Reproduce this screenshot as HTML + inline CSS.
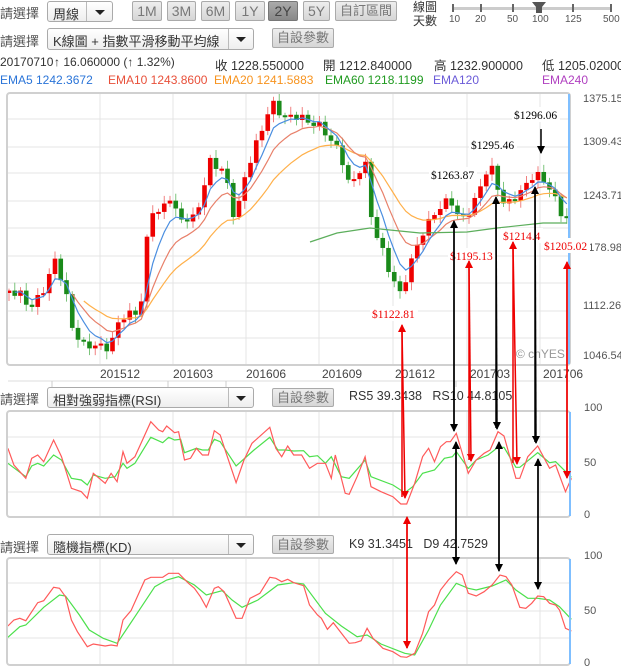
<!DOCTYPE html>
<html><head><meta charset="utf-8">
<style>
body{margin:0;width:621px;height:671px;overflow:hidden;background:#fff;font-family:"Liberation Sans","Noto Sans CJK TC",sans-serif;}
.t{position:absolute;white-space:nowrap;color:#444;}
.dd{position:absolute;border:1px solid #aaa;border-radius:3px;background:linear-gradient(#fff,#eee);font-size:13px;color:#333;box-sizing:border-box;}
.dd span{position:absolute;left:5px;top:2px;}
.dd i{position:absolute;top:0;bottom:0;right:0;border-left:1px solid #bbb;}
.dd i:after{content:"";position:absolute;left:50%;top:50%;margin:-2px 0 0 -5px;border:5px solid transparent;border-top:5px solid #222;border-bottom:0;}
.bt{position:absolute;border:1px solid #aaa;border-radius:2px;background:linear-gradient(#eee,#d6d6d6);color:#777;font-size:14px;text-align:center;box-sizing:border-box;}
.lg{position:absolute;top:73px;font-size:12px;overflow:hidden;white-space:nowrap;height:16px;}
</style></head><body>
<div class="t" style="left:0;top:3px;font-size:13px;color:#555">請選擇</div>
<div class="dd" style="left:47px;top:1px;width:66px;height:21px"><span>周線</span><i style="width:25px"></i></div>
<div class="bt" style="left:132px;top:1px;width:30px;height:20px;line-height:18px">1M</div>
<div class="bt" style="left:167px;top:1px;width:29px;height:20px;line-height:18px">3M</div>
<div class="bt" style="left:201px;top:1px;width:29px;height:20px;line-height:18px">6M</div>
<div class="bt" style="left:235px;top:1px;width:30px;height:20px;line-height:18px">1Y</div>
<div class="bt" style="left:268px;top:1px;width:30px;height:20px;line-height:18px;background:linear-gradient(#aaa,#888);color:#444;border-color:#777">2Y</div>
<div class="bt" style="left:303px;top:1px;width:27px;height:20px;line-height:18px">5Y</div>
<div class="bt" style="left:335px;top:1px;width:62px;height:20px;line-height:18px;font-size:13px">自訂區間</div>
<div class="t" style="left:413px;top:0;font-size:12px;line-height:14px;color:#333">線圖<br>天數</div>
<div style="position:absolute;left:453px;top:7px;width:159px;height:3px;background:#ccc"></div>
<div style="position:absolute;left:452px;top:4px;width:2px;height:8px;background:#666"></div>
<div style="position:absolute;left:480px;top:4px;width:2px;height:8px;background:#666"></div>
<div style="position:absolute;left:512px;top:4px;width:2px;height:8px;background:#666"></div>
<div style="position:absolute;left:572px;top:4px;width:2px;height:8px;background:#666"></div>
<div style="position:absolute;left:610px;top:4px;width:2px;height:8px;background:#666"></div>
<svg style="position:absolute;left:532px;top:2px" width="14" height="12"><path d="M0 0H14L10 5V11H4V5Z" fill="#555"/></svg>
<div class="t" style="left:449px;top:14px;font-size:10px;color:#555">10</div>
<div class="t" style="left:475px;top:14px;font-size:10px;color:#555">20</div>
<div class="t" style="left:507px;top:14px;font-size:10px;color:#555">50</div>
<div class="t" style="left:532px;top:14px;font-size:10px;color:#555">100</div>
<div class="t" style="left:565px;top:14px;font-size:10px;color:#555">125</div>
<div class="t" style="left:603px;top:14px;font-size:10px;color:#555">500</div>

<div class="t" style="left:0;top:31px;font-size:13px;color:#555">請選擇</div>
<div class="dd" style="left:47px;top:28px;width:207px;height:22px"><span>K線圖 + 指數平滑移動平均線</span><i style="width:24px"></i></div>
<div class="bt" style="left:272px;top:28px;width:62px;height:20px;line-height:18px;font-size:13px">自設參數</div>

<div class="t" style="left:0;top:55px;font-size:12px;color:#333">20170710</div>
<div class="t" style="left:54px;top:55px;font-size:12px;color:#333">↑ 16.060000 (↑ 1.32%)</div>
<div class="t" style="left:215px;top:55px;font-size:12.5px;color:#333">收 1228.550000</div>
<div class="t" style="left:323px;top:55px;font-size:12.5px;color:#333">開 1212.840000</div>
<div class="t" style="left:434px;top:55px;font-size:12.5px;color:#333">高 1232.900000</div>
<div class="t" style="left:542px;top:55px;font-size:12.5px;color:#333">低 1205.02000</div>

<div class="lg" style="left:0;width:102px;color:#2a74d8">EMA5 1242.3672</div>
<div class="lg" style="left:108px;width:102px;color:#e8503a">EMA10 1243.8600</div>
<div class="lg" style="left:214px;width:105px;color:#f7931e">EMA20 1241.5883</div>
<div class="lg" style="left:325px;width:102px;color:#1f9a1f">EMA60 1218.1199</div>
<div class="lg" style="left:433px;width:100px;color:#6a5ad8">EMA120</div>
<div class="lg" style="left:542px;width:79px;color:#b040c0">EMA240</div>

<div class="t" style="left:0;top:389px;font-size:13px;color:#555">請選擇</div>
<div class="dd" style="left:47px;top:387px;width:207px;height:21px"><span>相對強弱指標(RSI)</span><i style="width:24px"></i></div>
<div class="bt" style="left:272px;top:388px;width:62px;height:19px;line-height:17px;font-size:13px">自設參數</div>
<div class="t" style="left:349px;top:389px;font-size:12.5px;color:#333">RS5 39.3438 &nbsp; RS10 44.8105</div>

<div class="t" style="left:0;top:537px;font-size:13px;color:#555">請選擇</div>
<div class="dd" style="left:47px;top:534px;width:207px;height:21px"><span>隨機指標(KD)</span><i style="width:24px"></i></div>
<div class="bt" style="left:272px;top:535px;width:62px;height:19px;line-height:17px;font-size:13px">自設參數</div>
<div class="t" style="left:349px;top:537px;font-size:12.5px;color:#333">K9 31.3451 &nbsp; D9 42.7529</div>

<svg id="s" style="position:absolute;left:0;top:0" width="621" height="671" font-family="Liberation Sans, sans-serif">
<defs>
<marker id="ar" markerWidth="8" markerHeight="8" refX="7" refY="4" orient="auto" markerUnits="userSpaceOnUse"><path d="M0,0L8,4L0,8Z" fill="#e00"/></marker>
<marker id="ab" markerWidth="8" markerHeight="8" refX="7" refY="4" orient="auto" markerUnits="userSpaceOnUse"><path d="M0,0L8,4L0,8Z" fill="#000"/></marker>
</defs>
<g id="grid" stroke="#e4e4e4" stroke-width="1" fill="none"></g>
<g id="cd"></g>
<g id="ln" fill="none"></g>
<g id="frames" fill="none" stroke="#d0d0d0" stroke-width="2">
<rect x="7" y="93" width="563" height="272" rx="3"/>
<rect x="7" y="411" width="563" height="106" rx="3"/>
<rect x="7" y="558" width="563" height="107" rx="3"/>
</g>
<g stroke="#7fbfff" stroke-width="2"><line x1="569" y1="94" x2="569" y2="364"/><line x1="570" y1="412" x2="570" y2="516"/><line x1="570" y1="559" x2="570" y2="664"/></g>
<g fill="#555" font-size="11">
<text x="583" y="102">1375.15</text><text x="583" y="145">1309.43</text><text x="583" y="199">1243.71</text><text x="583" y="251">1178.98</text><text x="583" y="309">1112.26</text><text x="583" y="359">1046.54</text>
<text x="584" y="411">100</text><text x="584" y="466">50</text><text x="584" y="518">0</text>
<text x="584" y="559">100</text><text x="584" y="614">50</text><text x="584" y="666">0</text>
</g>
<g fill="#444" font-size="12">
<text x="100" y="378">201512</text><text x="173" y="378">201603</text><text x="246" y="378">201606</text><text x="322" y="378">201609</text><text x="395" y="378">201612</text><text x="470" y="378">201703</text><text x="543" y="378">201706</text>
</g>
<line x1="8" y1="381" x2="570" y2="381" stroke="#ddd"/>
<g stroke="#ccc"><line x1="52" y1="381" x2="52" y2="387"/><line x1="168" y1="381" x2="168" y2="387"/><line x1="226" y1="381" x2="226" y2="387"/><line x1="456" y1="381" x2="456" y2="387"/></g>
<text x="516" y="358" fill="#999" font-size="12">© cnYES</text>
<g font-family="Liberation Serif, serif" font-size="11.5">
<rect x="512" y="107" width="48" height="15" fill="#fff"/><text x="514" y="119" fill="#000">$1296.06</text>
<rect x="469" y="137" width="48" height="15" fill="#fff"/><text x="471" y="149" fill="#000">$1295.46</text>
<rect x="429" y="167" width="48" height="15" fill="#fff"/><text x="431" y="179" fill="#000">$1263.87</text>
<rect x="370" y="306" width="48" height="15" fill="#fff"/><text x="372" y="318" fill="#e00">$1122.81</text>
<rect x="448" y="248" width="48" height="15" fill="#fff"/><text x="450" y="260" fill="#e00">$1195.13</text>
<rect x="501" y="228" width="42" height="15" fill="#fff"/><text x="503" y="240" fill="#e00">$1214.4</text>
<rect x="542" y="238" width="48" height="15" fill="#fff"/><text x="544" y="250" fill="#e00">$1205.02</text>
</g>
<g stroke-width="1.5">
<line x1="402" y1="497" x2="402" y2="325" stroke="#e00" marker-end="url(#ar)"/><line x1="402" y1="330" x2="405" y2="498" stroke="#e00" marker-end="url(#ar)"/>
<line x1="407" y1="648" x2="407" y2="517" stroke="#e00" marker-end="url(#ar)"/><line x1="407" y1="520" x2="407" y2="648" stroke="#e00" marker-end="url(#ar)"/>
<line x1="469" y1="460" x2="469" y2="261" stroke="#e00" marker-end="url(#ar)"/><line x1="469" y1="265" x2="471" y2="461" stroke="#e00" marker-end="url(#ar)"/>
<line x1="513" y1="463" x2="513" y2="242" stroke="#e00" marker-end="url(#ar)"/><line x1="513" y1="246" x2="517" y2="464" stroke="#e00" marker-end="url(#ar)"/>
<line x1="567" y1="477" x2="567" y2="262" stroke="#e00" marker-end="url(#ar)"/><line x1="567" y1="266" x2="567" y2="478" stroke="#e00" marker-end="url(#ar)"/>
<line x1="454" y1="430" x2="454" y2="221" stroke="#000" marker-end="url(#ab)"/><line x1="454" y1="224" x2="454" y2="431" stroke="#000" marker-end="url(#ab)"/>
<line x1="456" y1="563" x2="456" y2="442" stroke="#000" marker-end="url(#ab)"/><line x1="456" y1="446" x2="456" y2="564" stroke="#000" marker-end="url(#ab)"/>
<line x1="496" y1="428" x2="496" y2="197" stroke="#000" marker-end="url(#ab)"/><line x1="496" y1="200" x2="497" y2="429" stroke="#000" marker-end="url(#ab)"/>
<line x1="499" y1="570" x2="499" y2="442" stroke="#000" marker-end="url(#ab)"/><line x1="499" y1="446" x2="499" y2="571" stroke="#000" marker-end="url(#ab)"/>
<line x1="535" y1="442" x2="535" y2="187" stroke="#000" marker-end="url(#ab)"/><line x1="535" y1="190" x2="536" y2="443" stroke="#000" marker-end="url(#ab)"/>
<line x1="538" y1="588" x2="538" y2="459" stroke="#000" marker-end="url(#ab)"/><line x1="538" y1="463" x2="538" y2="589" stroke="#000" marker-end="url(#ab)"/>
<line x1="541" y1="129" x2="541" y2="153" stroke="#000" marker-end="url(#ab)"/>
</g>
</svg>
<script>
var NS="http://www.w3.org/2000/svg";
function el(p,t,a){var e=document.createElementNS(NS,t);for(var k in a)e.setAttribute(k,a[k]);p.appendChild(e);return e;}
var g=document.getElementById('grid');
[119,147,173,201,228,256,283,311,338,437,463,492,583,611,638].forEach(function(y){el(g,'line',{x1:8,x2:569,y1:y,y2:y});});
[100,173,246,319,393,467,540].forEach(function(x){el(g,'line',{x1:x,x2:x,y1:94,y2:364});el(g,'line',{x1:x,x2:x,y1:412,y2:516});el(g,'line',{x1:x,x2:x,y1:559,y2:664});});
var P=[[8,288],[20,295],[30,310],[45,285],[55,262],[65,290],[72,325],[85,348],[110,345],[120,320],[140,310],[145,260],[150,210],[160,215],[170,195],[180,220],[195,220],[210,160],[225,175],[235,220],[245,175],[255,150],[265,120],[272,100],[285,120],[300,115],[320,128],[340,150],[350,190],[365,160],[372,220],[380,245],[390,275],[400,292],[410,265],[420,240],[435,210],[450,200],[460,222],[475,200],[490,165],[505,205],[520,195],[535,170],[550,190],[560,212],[568,215]];
function ip(x){for(var i=1;i<P.length;i++){if(x<=P[i][0]){var a=P[i-1],b=P[i];return a[1]+(b[1]-a[1])*(x-a[0])/(b[0]-a[0]);}}return P[P.length-1][1];}
var cd=document.getElementById('cd'),N=98,closes=[],xs=[],prev=ip(8)+5;
for(var i=0;i<N;i++){var x=9+i*5.75;var c=ip(x)+4*Math.sin(i*2.3)+2*Math.cos(i*1.1);var o=prev;
var up=c<o,col=up?'#e00':'#1a8a1a',wc=up?'#f08080':'#7cc47c';
var hi=Math.min(o,c)-(2+6*Math.abs(Math.sin(i*1.7))),lo=Math.max(o,c)+(2+6*Math.abs(Math.cos(i*1.3)));
el(cd,'line',{x1:x,x2:x,y1:hi,y2:lo,stroke:wc,'stroke-width':1});
el(cd,'rect',{x:x-2.3,y:Math.min(o,c),width:4.6,height:Math.max(2,Math.abs(o-c)),fill:col});
closes.push(c);xs.push(x);prev=c;}
var ln=document.getElementById('ln');
function ema(n,st,col){var a=2/(n+1),e=closes[0],pts=[];for(var i=0;i<N;i++){e=e+a*(closes[i]-e);if(i>=st)pts.push(xs[i].toFixed(1)+','+e.toFixed(1));}
el(ln,'polyline',{points:pts.join(' '),stroke:col,'stroke-width':1.2});}
ema(20,13,'#ffb04a');ema(10,11,'#e8806a');ema(5,1,'#4a8ee0');
el(ln,'polyline',{points:'310,242 337,233 370,228 420,233 467,232 497,228 543,223 567,223',stroke:'#5cae5c','stroke-width':1.2});
function pl(arr,oy,col){var p=[];for(var i=0;i<arr.length;i+=2)p.push((arr[i]/2.52).toFixed(1)+','+(oy+arr[i+1]/3).toFixed(1));el(ln,'polyline',{points:p.join(' '),stroke:col,'stroke-width':1.2});}
pl([20,310,65,350,80,318,95,310,110,318,135,285,155,300,180,355,205,360,220,375,235,345,265,355,290,350,310,310,320,325,340,310,380,232,410,248,425,232,440,240,455,238,465,278,495,265,510,270,525,270,540,238,555,245,595,318,640,270,680,232,700,270,720,270,740,273,765,272,780,290,800,287,820,310,835,290,860,350,880,355,920,300,935,350,990,375,1020,398,1040,380,1065,340,1095,330,1120,295,1140,290,1150,275,1180,325,1200,300,1230,285,1255,262,1270,262,1300,322,1310,322,1355,278,1385,308,1400,305,1440,352],360,'#4ce04c');
pl([20,265,35,315,65,355,80,295,95,285,110,305,135,240,155,290,180,385,205,395,220,415,235,340,265,370,280,340,295,365,310,275,320,310,340,290,380,185,400,210,410,215,420,198,440,218,450,215,465,300,480,295,495,265,510,285,525,285,540,212,555,225,570,280,595,368,615,300,635,250,680,202,695,265,710,290,725,258,740,285,760,285,780,325,800,310,820,310,835,355,845,285,870,400,880,403,900,350,920,290,935,380,960,395,990,410,1010,432,1025,432,1045,370,1065,290,1080,265,1095,305,1110,260,1125,245,1135,245,1150,220,1180,340,1200,300,1220,280,1235,270,1255,215,1270,228,1300,355,1310,355,1330,290,1355,258,1385,325,1400,315,1425,395,1440,355],360,'#ff5a5a');
pl([20,352,50,320,65,315,110,262,150,225,165,228,200,285,225,330,260,355,295,370,340,290,390,200,420,180,450,170,490,195,520,225,560,212,585,240,610,262,650,240,700,195,740,188,765,192,820,280,860,318,900,350,925,345,960,372,1020,400,1045,405,1080,330,1110,255,1150,190,1180,205,1200,210,1240,198,1275,180,1300,210,1330,235,1355,235,1385,240,1410,260,1440,298],520,'#4ce04c');
pl([20,318,35,300,50,295,65,302,95,248,110,242,135,202,150,205,165,230,180,300,195,335,220,380,235,372,265,378,280,375,295,378,310,300,330,272,365,180,380,172,410,172,425,160,450,160,475,190,490,205,505,230,520,262,540,205,550,200,565,215,595,295,610,295,630,235,655,220,680,172,695,175,710,185,725,178,740,188,765,197,780,255,800,285,810,295,825,328,840,308,880,370,895,368,910,362,925,325,940,355,965,385,990,395,1010,410,1025,412,1045,400,1065,340,1080,275,1095,255,1110,210,1130,180,1150,155,1165,165,1180,220,1200,228,1220,215,1240,195,1260,165,1275,170,1290,195,1310,262,1325,265,1340,250,1355,228,1370,230,1385,250,1400,255,1410,270,1425,325,1440,333],520,'#ff5a5a');
</script>
</body></html>
